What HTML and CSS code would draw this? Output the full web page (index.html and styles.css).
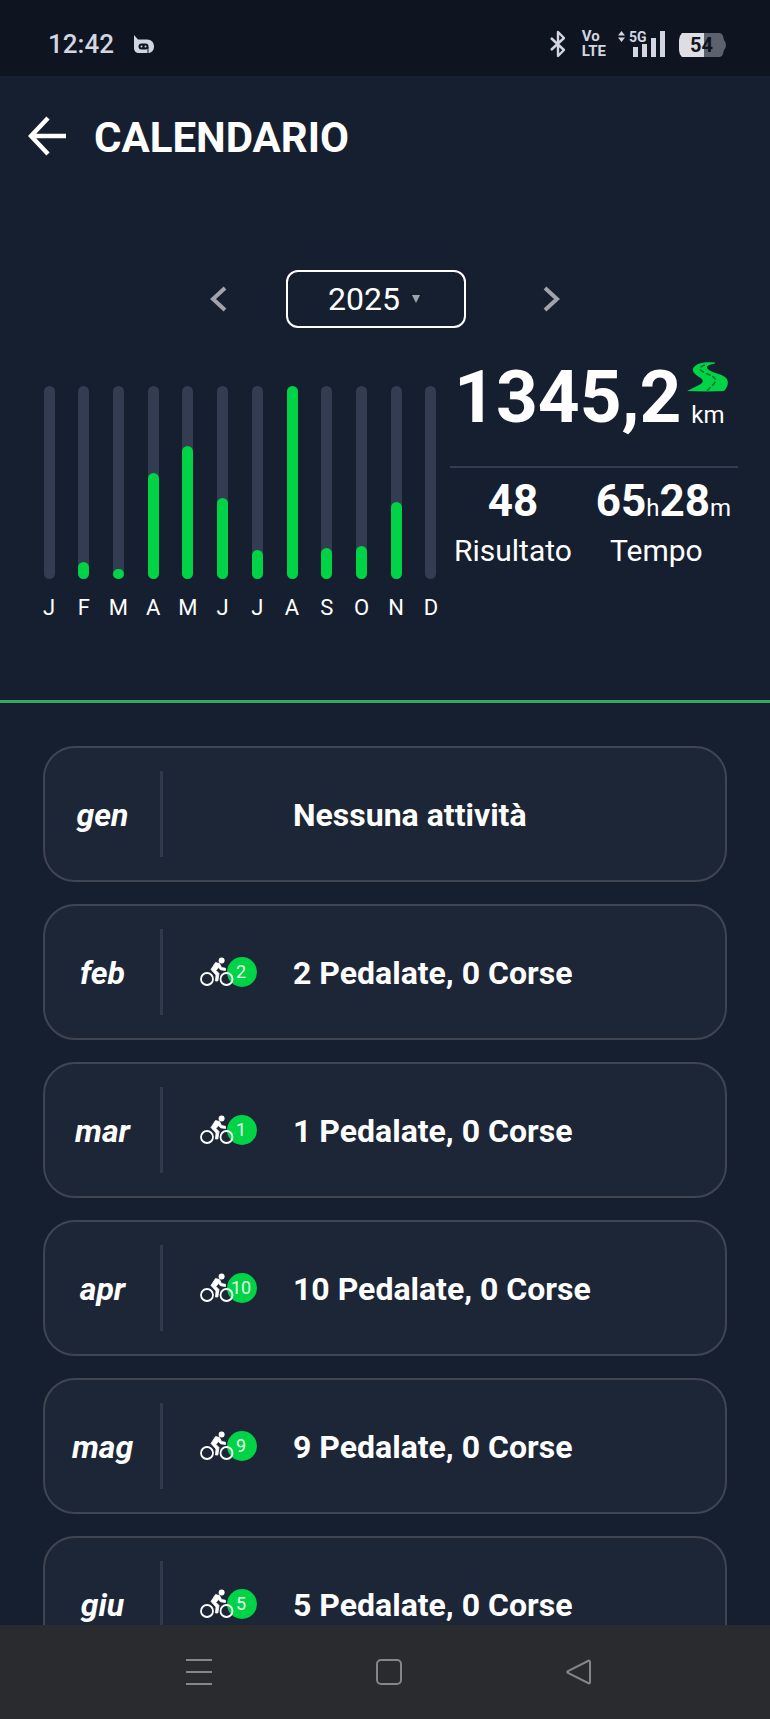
FILE: index.html
```html
<!DOCTYPE html>
<html lang="it">
<head>
<meta charset="utf-8">
<meta name="viewport" content="width=device-width, initial-scale=1">
<title>Calendario</title>
<link rel="stylesheet" href="styles.css">
</head>
<body class="app">
<svg class="defs" aria-hidden="true">
  <symbol id="bike" viewBox="0 0 34 30">
    <circle cx="7" cy="22" r="6" fill="none" stroke="#fff" stroke-width="1.8"/>
    <circle cx="26.5" cy="22" r="6" fill="none" stroke="#fff" stroke-width="1.8"/>
    <circle cx="21.6" cy="3.400" r="3" fill="#fff"/>
    <path d="M11 12.500 L15.500 5.500 L19.500 6.500 L21.500 10.500 L25.500 11.300 V13.500 L20.500 12.800 L18.500 10.500 L16 13.500 L19 16.500 L17.800 24 H15.500 L16 18 Z" fill="#fff" stroke="#fff" stroke-width="0.800" stroke-linejoin="round"/>
  </symbol>
</svg>

<div class="status">
  <div class="status-side">
    <time class="clock">12:42</time>
    <svg class="logo" viewBox="0 0 20 18" aria-hidden="true"><path d="M0 0 L4 4.500 H13 C17.500 4.500 20 7.500 20 11.500 C20 15.500 17.500 18 14 18 H5 C2 18 0 16 0 13 Z" fill="#d3d6e0"/><rect x="4.500" y="8.500" width="10" height="6" rx="3" fill="#0f1421"/><path d="M14 12 V18" stroke="#0f1421" stroke-width="1"/><circle cx="7.500" cy="11.500" r="1" fill="#d3d6e0"/><circle cx="11.500" cy="11.500" r="1" fill="#d3d6e0"/></svg>
  </div>
  <div class="status-icons">
    <svg width="16" height="28" viewBox="0 0 16 28" aria-label="Bluetooth"><path d="M1 8 L14 20 L8 26 V2 L14 8 L1 20" fill="none" stroke="#d3d6e0" stroke-width="2.400" stroke-linejoin="round"/></svg>
    <div class="volte"><span>Vo</span><span>LTE</span></div>
    <div class="signal">
      <svg width="48" height="28" viewBox="0 0 48 28" aria-hidden="true"><g fill="#d3d6e0"><path d="M0 5.500 L3.500 1 L7 5.500 Z M0 7.500 H7 L3.500 12 Z"/><rect x="15" y="17" width="5" height="10"/><rect x="24" y="14" width="5" height="13"/><rect x="33" y="8" width="5" height="19"/><rect x="42" y="1" width="5" height="26"/></g></svg>
      <span class="net">5G</span>
    </div>
    <div class="battery">
      <svg width="48" height="28" viewBox="0 0 48 28" aria-hidden="true"><path d="M26 3 H41 Q44 3 45 6 L46 10 Q48 12 48 15 Q48 18 46 20 L45 24 Q44 27 41 27 H26 Z" fill="#5d616e"/><path d="M26 3 H4 Q1 6 1 10 V20 Q1 24 4 27 H26 Z" fill="#dcdee4"/></svg>
      <span class="level">54</span>
    </div>
  </div>
</div>

<header class="header">
  <button class="icon-btn" aria-label="Indietro"><svg width="40" height="40" viewBox="0 0 40 40"><path d="M38 20 H3 M20 2 L3 20 L20 38" fill="none" stroke="#fff" stroke-width="4.500"/></svg></button>
  <h1 class="title">CALENDARIO</h1>
</header>

<nav class="years" aria-label="Anno">
  <button class="icon-btn" aria-label="Anno precedente"><svg width="18" height="26" viewBox="0 0 18 26"><path d="M15 2 L3 13 L15 24" fill="none" stroke="#a2a3ab" stroke-width="4"/></svg></button>
  <label class="year">
    <select class="year-select" aria-label="Anno"><option>2025</option></select>
    <svg class="caret" viewBox="0 0 8 8" aria-hidden="true"><path d="M0 0 H8 L4 8 Z" fill="#a2a3ab"/></svg>
  </label>
  <button class="icon-btn" aria-label="Anno successivo"><svg width="18" height="26" viewBox="0 0 18 26"><path d="M3 2 L15 13 L3 24" fill="none" stroke="#a2a3ab" stroke-width="4"/></svg></button>
</nav>

<section class="summary">
  <ul class="chart">
    <li class="col"><div class="track"></div>J</li>
    <li class="col"><div class="track"><div class="fill" style="height:9%"></div></div>F</li>
    <li class="col"><div class="track"><div class="fill" style="height:5%"></div></div>M</li>
    <li class="col"><div class="track"><div class="fill" style="height:55%"></div></div>A</li>
    <li class="col"><div class="track"><div class="fill" style="height:69%"></div></div>M</li>
    <li class="col"><div class="track"><div class="fill" style="height:42%"></div></div>J</li>
    <li class="col"><div class="track"><div class="fill" style="height:15%"></div></div>J</li>
    <li class="col"><div class="track"><div class="fill" style="height:100%"></div></div>A</li>
    <li class="col"><div class="track"><div class="fill" style="height:16%"></div></div>S</li>
    <li class="col"><div class="track"><div class="fill" style="height:17%"></div></div>O</li>
    <li class="col"><div class="track"><div class="fill" style="height:40%"></div></div>N</li>
    <li class="col"><div class="track"></div>D</li>
  </ul>
  <div class="stats">
    <div class="total">
      <strong class="distance">1345,2</strong>
      <div class="unit">
        <svg class="road" viewBox="0 0 41 30" aria-hidden="true"><path d="M28 0.500 C18 -0.500 10 1 7 5 C4 9 7 12 12 15 C17 18 17 20 12 23 L0 29 L21 29.500 L37 29 C42 24 42 18 38 15 C34 12 26 11 22 8 C18 5 20 3 28 1.500 Z" fill="#00d345"/><path d="M18 3 C11 5 12 8 18 11 C26 14 30 16 28 20 C27 23 23 25 19 30" fill="none" stroke="#0c6b34" stroke-width="1.500" stroke-dasharray="5 2"/></svg>
        <span>km</span>
      </div>
    </div>
    <dl class="pair">
      <div class="stat"><dt class="stat-label">Risultato</dt><dd class="stat-value">48</dd></div>
      <div class="stat"><dt class="stat-label stat-label-time">Tempo</dt><dd class="stat-value">65<small class="small">h</small>28<small class="small">m</small></dd></div>
    </dl>
  </div>
</section>

<main class="months">
  <article class="card"><h2 class="month">gen</h2><div class="rides"></div><p class="text">Nessuna attività</p></article>
  <article class="card"><h2 class="month">feb</h2><div class="rides"><svg class="bike"><use href="#bike"/></svg><span class="badge">2</span></div><p class="text">2 Pedalate, 0 Corse</p></article>
  <article class="card"><h2 class="month">mar</h2><div class="rides"><svg class="bike"><use href="#bike"/></svg><span class="badge">1</span></div><p class="text">1 Pedalate, 0 Corse</p></article>
  <article class="card"><h2 class="month">apr</h2><div class="rides"><svg class="bike"><use href="#bike"/></svg><span class="badge">10</span></div><p class="text">10 Pedalate, 0 Corse</p></article>
  <article class="card"><h2 class="month">mag</h2><div class="rides"><svg class="bike"><use href="#bike"/></svg><span class="badge">9</span></div><p class="text">9 Pedalate, 0 Corse</p></article>
  <article class="card"><h2 class="month">giu</h2><div class="rides"><svg class="bike"><use href="#bike"/></svg><span class="badge">5</span></div><p class="text">5 Pedalate, 0 Corse</p></article>
</main>

<footer class="navbar">
  <button class="icon-btn" aria-label="Recenti"><svg width="28" height="28" viewBox="0 0 28 28"><path d="M1 2 H27 M1 14 H27 M1 26 H27" stroke="#85868a" stroke-width="2"/></svg></button>
  <button class="icon-btn" aria-label="Home"><svg width="28" height="28" viewBox="0 0 28 28"><rect x="2" y="2" width="24" height="24" rx="4" fill="none" stroke="#85868a" stroke-width="2"/></svg></button>
  <button class="icon-btn" aria-label="Indietro"><svg width="28" height="28" viewBox="0 0 28 28"><path d="M24 2.500 L3 13 Q1.500 14 3 15 L24 25.500 Q25 25.500 25 24 V4 Q25 2.500 24 2.500 Z" fill="none" stroke="#85868a" stroke-width="2"/></svg></button>
</footer>
</body>
</html>
```
FILE: styles.css
```css
* { box-sizing: border-box; }

.app {
  margin: 0;
  height: 100vh;
  display: flex;
  flex-direction: column;
  background: #161f2f;
  color: #fff;
  font-family: Roboto, "Liberation Sans", sans-serif;
}

.app > * { flex-shrink: 0; }

.defs { position: absolute; width: 0; height: 0; }

.icon-btn {
  display: flex;
  padding: 0;
  border: 0;
  background: none;
}

.status {
  display: flex;
  justify-content: space-between;
  align-items: center;
  height: 76px;
  padding: 12px 44px 0 48px;
  background: #0f1421;
}

.status-side { display: flex; align-items: center; gap: 20px; }
.clock { font-size: 26px; font-weight: 500; color: #d3d6e0; }
.logo { width: 20px; height: 18px; }

.status-icons {
  display: flex;
  align-items: center;
  gap: 12px;
  color: #d3d6e0;
  font-weight: 700;
}

.volte {
  display: flex;
  flex-direction: column;
  margin-left: 4px;
  font-size: 15px;
  line-height: 15px;
}

.signal, .battery { position: relative; display: flex; }

.net {
  position: absolute;
  top: 0;
  left: 11px;
  font-size: 14px;
  line-height: 14px;
}

.level {
  position: absolute;
  top: 3px;
  left: 12px;
  color: #0f1421;
  font-size: 20px;
  line-height: 24px;
}

.header {
  display: flex;
  align-items: center;
  gap: 26px;
  height: 120px;
  padding: 0 28px;
}

.title {
  margin: 0;
  padding-top: 3px;
  font-size: 42px;
  line-height: 48px;
  font-weight: 700;
}

.years {
  display: flex;
  justify-content: center;
  align-items: center;
  gap: 76px;
  margin-top: 74px;
}

.years > .icon-btn:first-child { margin-right: -18px; }

.year { position: relative; }

.year-select {
  width: 180px;
  height: 58px;
  padding: 0 0 0 40px;
  appearance: none;
  border: 2px solid #fff;
  border-radius: 12px;
  background: none;
  color: #fff;
  font: 400 32px Roboto, sans-serif;
}

.caret {
  position: absolute;
  top: 25px;
  right: 46px;
  width: 8px;
  height: 8px;
}

.summary {
  display: flex;
  align-items: flex-start;
  gap: 8px;
  height: 372px;
  padding: 28px 32px 0 38px;
}

.chart {
  flex: 1;
  display: flex;
  justify-content: space-between;
  margin: 30px 0 0;
  padding: 0;
  list-style: none;
}

.col {
  display: flex;
  flex-direction: column;
  align-items: center;
  gap: 16px;
  width: 22px;
  font-size: 22px;
  line-height: 26px;
}

.track {
  display: flex;
  align-items: flex-end;
  width: 11px;
  height: 193px;
  border-radius: 6px;
  background: #343c51;
}

.fill { width: 100%; border-radius: 6px; background: #00d345; }

.stats { width: 288px; }

.total {
  display: flex;
  gap: 6px;
  height: 112px;
  padding-left: 4px;
  border-bottom: 2px solid #343c51;
}

.distance { font-size: 73px; line-height: 82px; font-weight: 700; }

.unit {
  display: flex;
  flex-direction: column;
  align-items: center;
  gap: 8px;
  padding-top: 6px;
  font-size: 24px;
  line-height: 30px;
}

.road { width: 41px; height: 30px; }

.pair { display: flex; justify-content: space-between; margin: 0; padding: 8px 7px 0 4px; }

.stat { display: flex; flex-direction: column-reverse; align-items: center; }
.stat-label { font-size: 30px; line-height: 50px; }
.stat-label-time { padding-right: 14px; }
.stat-value { margin: 0; font-size: 44px; line-height: 50px; font-weight: 700; }
.small { font-size: 24px; line-height: 24px; font-weight: 400; }

.app > .months {
  flex: 1 1 0;
  min-height: 0;
  overflow: hidden;
  display: flex;
  flex-direction: column;
  gap: 22px;
  padding: 43px 43px 0;
  border-top: 3px solid #36a95c;
}

.card {
  flex-shrink: 0;
  display: flex;
  align-items: center;
  height: 136px;
  border: 2px solid #414552;
  border-radius: 32px;
  background: #1c2637;
}

.month {
  width: 118px;
  margin: 0;
  padding-top: 2px;
  border-right: 3px solid #313a4c;
  font-size: 32px;
  line-height: 84px;
  font-weight: 700;
  font-style: italic;
  text-align: center;
}

.rides {
  display: flex;
  align-items: center;
  width: 130px;
  padding-left: 37px;
}

.bike { width: 34px; height: 30px; z-index: 1; }

.badge {
  width: 30px;
  height: 30px;
  margin-left: -7px;
  padding-right: 2px;
  border-radius: 50%;
  background: #00d345;
  color: #e2fbe9;
  font-size: 18px;
  line-height: 30px;
  text-align: center;
}

.text { margin: 0; padding-top: 2px; font-size: 32px; line-height: 40px; font-weight: 700; }

.navbar {
  display: flex;
  justify-content: space-between;
  align-items: center;
  height: 94px;
  padding: 0 23% 0 24%;
  background: #2a2b2e;
}
```
